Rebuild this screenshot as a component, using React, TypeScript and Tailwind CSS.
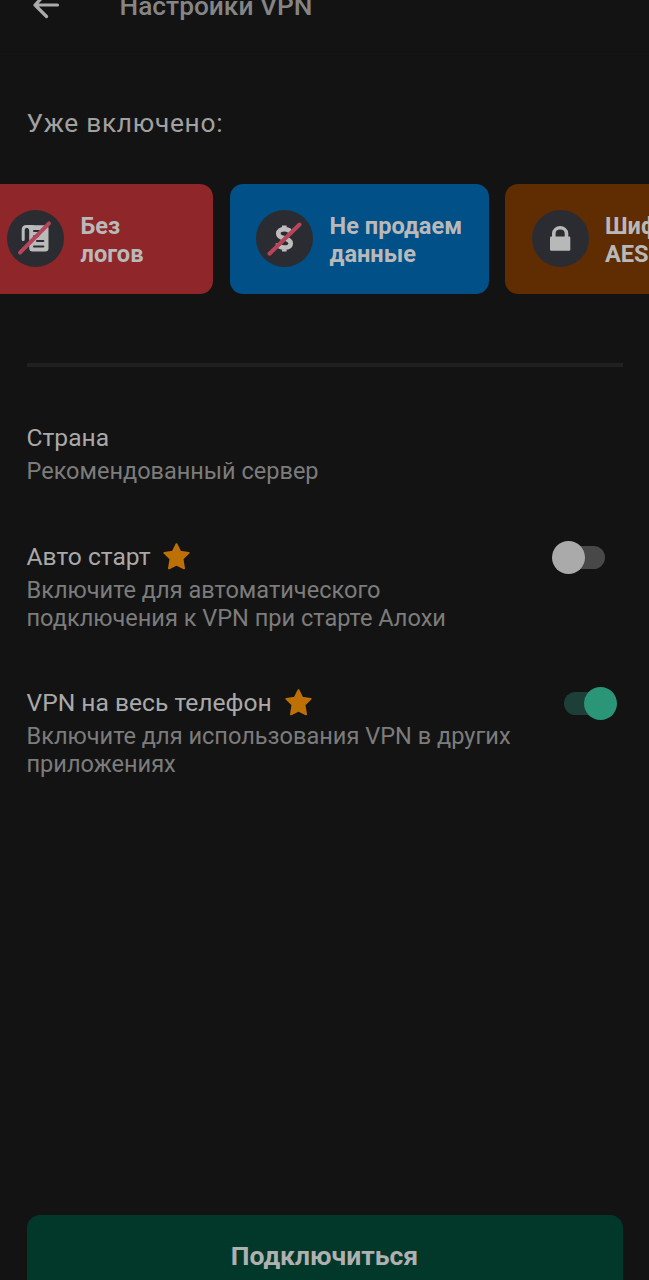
import type { ReactNode } from "react";

function Star() {
  return (
    <svg viewBox="0 0 27 27" className="-mt-[2px] h-[27px] w-[27px] shrink-0 text-[#bd7006]">
      <path
        d="M13.5 1.2 L17.2 8.7 L25.6 9.9 L19.5 15.9 L21 25.3 L13.5 21.5 L6 25.3 L7.5 15.9 L1.4 9.9 L9.8 8.7 Z"
        fill="currentColor"
        stroke="currentColor"
        strokeWidth="2"
        strokeLinejoin="round"
      />
    </svg>
  );
}

function LogsIcon() {
  return (
    <svg viewBox="0 0 57 57" className="h-[57px] w-[57px]">
      <path d="M16.2 29.5 V20 Q16.2 16.6 19.5 16.6 H26" fill="none" stroke="#bababa" strokeWidth="3" strokeLinecap="round" />
      <path d="M19 15.2 H38.3 Q41.5 15.2 41.5 18.2 V38.5 Q41.5 41.5 38.3 41.5 H25.5 Q22.2 41.5 22.2 38 V20 Z" fill="#bababa" />
      <path d="M20.3 19.5 V29 M27 21 H34 M27 26.2 H31 M30 31 H36.3 M27 36.5 H36.3" fill="none" stroke="#2b2c31" strokeWidth="2.1" strokeLinecap="round" />
      <path d="M13 42.7 L42 13.3" stroke="#b4455a" strokeWidth="4" strokeLinecap="round" />
    </svg>
  );
}

function MoneyIcon() {
  return (
    <svg viewBox="0 0 57 57" className="h-[57px] w-[57px]">
      <path
        d="M34.5 23.5 C34.1 20.5 31.8 19.2 28.4 19.2 C24.8 19.2 22.3 20.8 22.3 23.5 C22.3 26.6 25.1 27.6 28.4 28.4 C32.2 29.4 34.7 30.5 34.7 33.4 C34.7 36.3 32.2 37.5 28.5 37.5 C24.7 37.5 22.2 36.3 21.8 33.2 M28.3 15.5 V19 M28.3 38 V41.5"
        fill="none"
        stroke="#bdbdbd"
        strokeWidth="4.7"
      />
      <path d="M13.5 43.7 L43.5 14.5" stroke="#b4455a" strokeWidth="4" strokeLinecap="round" />
    </svg>
  );
}

function LockIcon() {
  return (
    <svg viewBox="0 0 57 57" className="h-[57px] w-[57px]">
      <path d="M21.8 29 V23.8 C21.8 15.8 34.5 15.8 34.5 23.8 V29" fill="none" stroke="#b8b8b8" strokeWidth="3.6" />
      <rect x="18" y="26.5" width="20.3" height="14.3" rx="1.2" fill="#b8b8b8" />
    </svg>
  );
}

type CardProps = { className: string; icon: ReactNode; children: ReactNode };

function FeatureCard({ className, icon, children }: CardProps) {
  return (
    <div className={`flex h-[110px] shrink-0 items-center rounded-[13px] ${className}`}>
      <div className="-mt-px h-[57px] w-[57px] shrink-0 rounded-full bg-[#2b2c31]">{icon}</div>
      <p className="ml-[16.5px] pt-[1px] text-[23.6px] leading-[28px] font-bold whitespace-nowrap text-[#b9b9b9]">{children}</p>
    </div>
  );
}

function Toggle({ on = false }: { on?: boolean }) {
  return on ? (
    <span role="switch" aria-checked="true" className="-mt-px mr-[32px] flex h-[33px] w-[53px] items-center justify-end">
      <span className="-mr-[20px] h-[23px] w-[40px] shrink-0 rounded-full bg-[#1c3f37]" />
      <span className="z-10 h-[33px] w-[33px] shrink-0 rounded-full bg-[#2b9578]" />
    </span>
  ) : (
    <span role="switch" aria-checked="false" className="-mt-px mr-[44.5px] flex h-[33px] w-[53px] items-center">
      <span className="z-10 h-[33px] w-[33px] shrink-0 rounded-full bg-[#aaaaaa]" />
      <span className="-ml-[20px] h-[23px] w-[40px] shrink-0 rounded-full bg-[#484848]" />
    </span>
  );
}

export default function App() {
  return (
    <div className="flex h-[1280px] w-[649px] flex-col overflow-hidden bg-[#131313] font-['Roboto',sans-serif] text-[#a9a9a9]">
      <header className="flex h-[52px] shrink-0 items-start border-b border-[#111111]">
        <svg viewBox="0 0 28 28" className="-mt-[9px] ml-[32px] h-[28px] w-[28px] shrink-0" fill="none" stroke="#aaaaaa" strokeWidth="3.2" strokeLinecap="round" strokeLinejoin="round">
          <path d="M25.5 14 H3 M14.5 2 L3 14 L14.5 25.5" />
        </svg>
        <h1 className="-mt-[8px] ml-[59.5px] text-[26.3px] leading-[28px] font-medium text-[#858585]">Настройки VPN</h1>
      </header>
      <h2 className="mt-[56px] ml-[26.5px] shrink-0 text-[26.3px] leading-[31px] tracking-[0.7px] text-[#a1a1a1]">Уже включено:</h2>
      <section className="mt-[45px] flex shrink-0 gap-[16.5px]">
        <FeatureCard className="-ml-[19px] w-[232px] pl-[26px] bg-[#8e262a]" icon={<LogsIcon />}>Без<br />логов</FeatureCard>
        <FeatureCard className="w-[259px] pl-[26.5px] bg-[#015088]" icon={<MoneyIcon />}>Не продаем<br />данные</FeatureCard>
        <FeatureCard className="w-[259px] pl-[26.5px] bg-[#602c02]" icon={<LockIcon />}>Шифрование<br />AES-256</FeatureCard>
      </section>
      <hr className="mt-[69px] mr-[26.5px] ml-[26.5px] h-[4px] shrink-0 border-0 bg-[#202020]" />
      <section className="mt-[56px] ml-[26.5px] shrink-0">
        <h3 className="text-[24.6px] leading-[30px]">Страна</h3>
        <p className="mt-[4px] text-[23.5px] leading-[28px] text-[#7c7c7c]">Рекомендованный сервер</p>
      </section>
      <section className="mt-[57px] ml-[26.5px] flex shrink-0 items-start justify-between">
        <div>
          <div className="flex h-[30px] items-center gap-[13px]">
            <h3 className="text-[24.6px] leading-[30px]">Авто старт</h3>
            <Star />
          </div>
          <p className="mt-[4px] text-[23.56px] leading-[28px] whitespace-nowrap text-[#7c7c7c]">Включите для автоматического<br />подключения к VPN при старте Алохи</p>
        </div>
        <Toggle />
      </section>
      <section className="mt-[56px] ml-[26.5px] flex shrink-0 items-start justify-between">
        <div>
          <div className="flex h-[30px] items-center gap-[13px]">
            <h3 className="text-[24.6px] leading-[30px]">VPN на весь телефон</h3>
            <Star />
          </div>
          <p className="mt-[4px] text-[23.56px] leading-[28px] whitespace-nowrap text-[#7c7c7c]">Включите для использования VPN в других<br />приложениях</p>
        </div>
        <Toggle on />
      </section>
      <button className="mt-auto mr-[26.5px] -mb-[18px] ml-[26.5px] flex h-[83px] shrink-0 items-center justify-center rounded-[13px] bg-[#023829] pb-[2px] text-[26.5px] font-bold text-[#b0b0b0]">
        Подключиться
      </button>
    </div>
  );
}
